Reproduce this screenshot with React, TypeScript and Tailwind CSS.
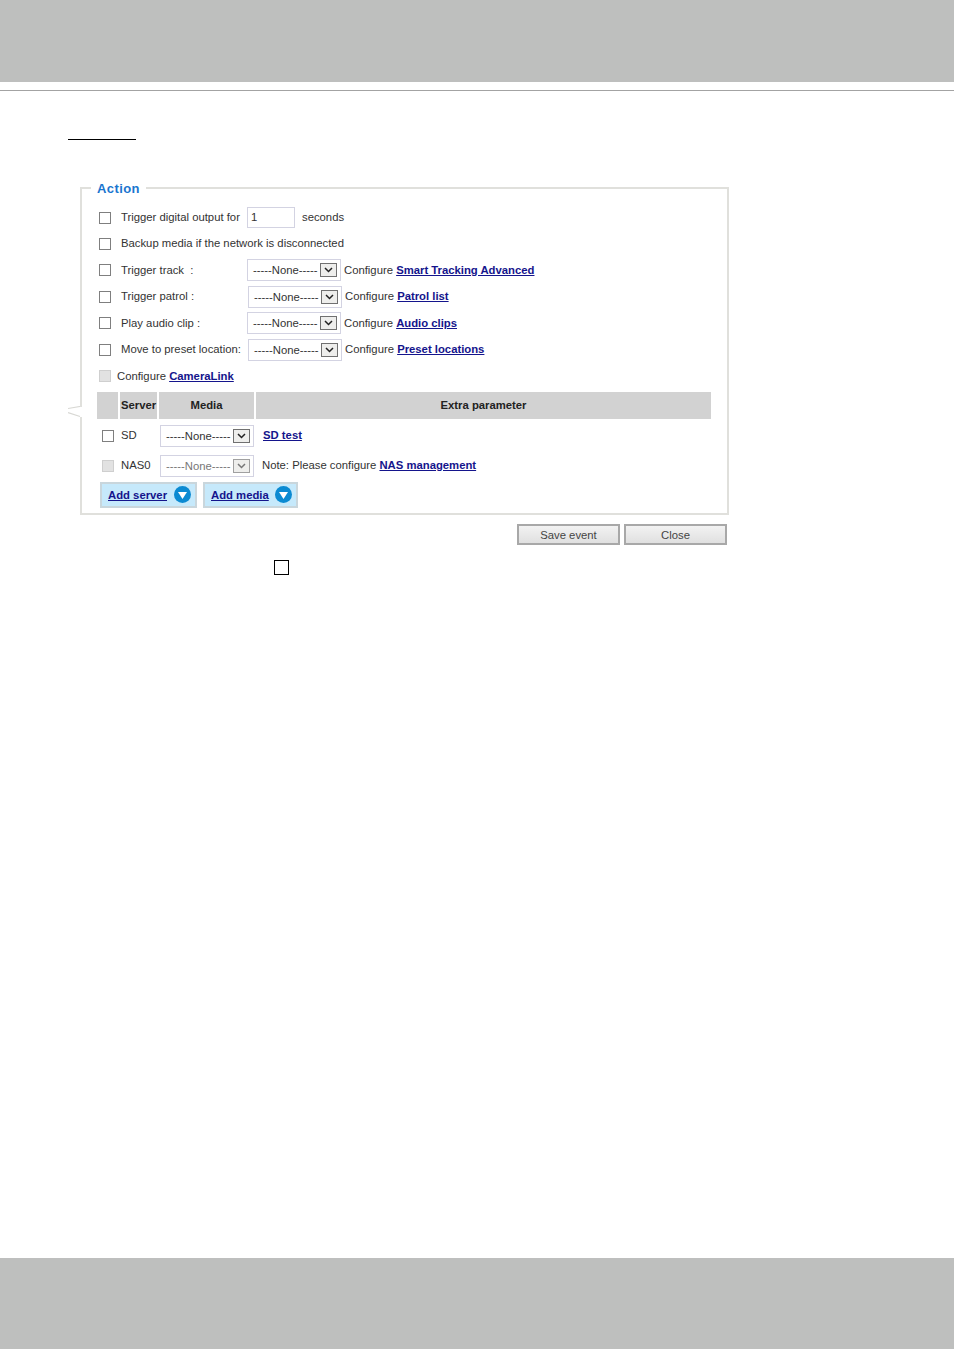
import React from "react";

function Check({ disabled }: { disabled?: boolean }) {
  return (
    <span
      className={
        "block w-3 h-3 shrink-0 border " +
        (disabled ? "bg-[#e2e2e2] border-[#cfcfcf]" : "bg-white border-[#7f7f7f]")
      }
    />
  );
}

function NoneSelect({ disabled, className }: { disabled?: boolean; className?: string }) {
  return (
    <div
      className={
        "flex items-center justify-between w-[94px] h-[22px] pl-[5px] pr-[3px] border border-[#d3d3e2] bg-white shrink-0 " +
        (disabled ? "text-[#777] " : "text-[#333] ") +
        (className ?? "")
      }
    >
      <span className="whitespace-nowrap pt-px">-----None-----</span>
      <span
        className={
          "flex items-center justify-center w-[17px] h-[14px] border bg-[#eeeeec] " +
          (disabled ? "border-[#a0a0a0]" : "border-[#707070]")
        }
      >
        <svg width="9" height="6" viewBox="0 0 9 6" fill="none">
          <path
            d="M1 1l3.5 3.5L8 1"
            stroke={disabled ? "#777" : "#222"}
            strokeWidth="1.5"
          />
        </svg>
      </span>
    </div>
  );
}

function Link({ children }: { children: React.ReactNode }) {
  return (
    <a href="#" className="font-bold text-[#14148c] underline">
      {children}
    </a>
  );
}

function ActionRow({
  label,
  link,
  offset,
}: {
  label: string;
  link: string;
  offset?: boolean;
}) {
  return (
    <div className="flex items-center h-[26.5px] pl-[2px]">
      <Check />
      <span className="w-[136px] pl-[10px] shrink-0 whitespace-pre">{label}</span>
      <NoneSelect className={offset ? "ml-px" : ""} />
      <span className="ml-[3px]">
        Configure <Link>{link}</Link>
      </span>
    </div>
  );
}

function AddButton({ label, className }: { label: string; className?: string }) {
  return (
    <div
      className={
        "flex items-center justify-between h-[26px] pl-[6px] pr-[4px] bg-[#c6e9fb] border-2 border-[#c9d6dc] " +
        (className ?? "")
      }
    >
      <span className="pt-[2px]">
        <Link>{label}</Link>
      </span>
      <svg width="17" height="17" viewBox="0 0 17 17">
        <circle cx="8.5" cy="8.5" r="8.5" fill="#0b8ad2" />
        <path d="M4 6h9l-4.5 7z" fill="#fff" />
      </svg>
    </div>
  );
}

export default function App() {
  return (
    <div className="relative w-[954px] h-[1349px] bg-white flex flex-col font-['Liberation_Sans',Arial,sans-serif] text-[11.3px] text-[#333]">
      <div className="h-[82px] bg-[#bebfbe]" />
      <div className="h-px mt-[8px] bg-[#a3a3a3]" />
      <div className="h-px w-[68px] ml-[68px] mt-[48px] bg-black" />

      <div className="relative ml-[80px] w-[649px] mt-[39px]">
        <fieldset className="border-2 border-[#e0e0dc] pl-[9px] pr-[15px] h-[336px]">
          <legend className="px-[6px] pt-[2px] text-[13px] leading-[15px] font-bold text-[#1a75cf] tracking-[0.4px]">
            Action
          </legend>
          <div className="ml-[6px] flex flex-col">
            <div className="flex items-center h-[25.5px] pl-[2px] mt-[9px]">
              <Check />
              <span className="w-[136px] pl-[10px] shrink-0 whitespace-nowrap">Trigger digital output for</span>
              <span className="flex items-center w-[48px] h-[21px] pl-[3px] border border-[#d3d3e2]">1</span>
              <span className="ml-[7px]">seconds</span>
            </div>
            <div className="flex items-center h-[26.5px] pl-[2px]">
              <Check />
              <span className="pl-[10px]">Backup media if the network is disconnected</span>
            </div>
            <ActionRow label="Trigger track  :" link="Smart Tracking Advanced" />
            <ActionRow label="Trigger patrol :" link="Patrol list" offset />
            <ActionRow label="Play audio clip :" link="Audio clips" />
            <ActionRow label="Move to preset location:" link="Preset locations" offset />
            <div className="flex items-center h-[26.5px] pl-[2px]">
              <Check disabled />
              <span className="pl-[6px]">
                Configure <Link>CameraLink</Link>
              </span>
            </div>

            <div className="flex gap-[2px] h-[27px] mt-[2px] font-bold text-[#222]">
              <div className="w-[21px] bg-[#d2d2d2]" />
              <div className="w-[37px] bg-[#d2d2d2] flex items-center pl-px">Server</div>
              <div className="w-[95px] bg-[#d2d2d2] flex items-center justify-center">Media</div>
              <div className="w-[455px] bg-[#d2d2d2] flex items-center justify-center">Extra parameter</div>
            </div>

            <div className="flex items-center h-[22px] mt-[6px] pl-[5px]">
              <Check />
              <span className="w-[46px] pl-[7px] shrink-0">SD</span>
              <NoneSelect />
              <span className="ml-[9px]">
                <Link>SD test</Link>
              </span>
            </div>
            <div className="flex items-center h-[22px] mt-[8px] pl-[5px]">
              <Check disabled />
              <span className="w-[46px] pl-[7px] shrink-0">NAS0</span>
              <NoneSelect disabled />
              <span className="ml-[8px]">
                Note: Please configure <Link>NAS management</Link>
              </span>
            </div>
            <div className="flex gap-[6px] mt-[5px] ml-[3px]">
              <AddButton label="Add server" className="w-[97px]" />
              <AddButton label="Add media" className="w-[95px]" />
            </div>
          </div>
        </fieldset>

        {/* speech bubble tip on the left edge */}
        <svg className="absolute left-[-12px] top-[227px]" width="14" height="12" viewBox="0 0 14 12" fill="none">
          <path d="M12.5 1v10" stroke="#fff" strokeWidth="3" />
          <path d="M12 0.5L0 2.5M0 6.5L12 10.5" stroke="#d8d8d4" strokeWidth="1.2" />
        </svg>
      </div>

      <div className="flex gap-[4px] ml-[517px] mt-[9px]">
        <button className="w-[103px] h-[21px] pt-px border-2 border-[#a8a8a8] bg-gradient-to-b from-[#f2f2f2] to-[#e0e0e0] text-[#444]">
          Save event
        </button>
        <button className="w-[103px] h-[21px] pt-px border-2 border-[#a8a8a8] bg-gradient-to-b from-[#f2f2f2] to-[#e0e0e0] text-[#444]">
          Close
        </button>
      </div>

      <div className="w-[15px] h-[15px] ml-[274px] mt-[15px] border border-black" />

      <div className="mt-auto h-[91px] bg-[#bebfbe]" />
    </div>
  );
}
